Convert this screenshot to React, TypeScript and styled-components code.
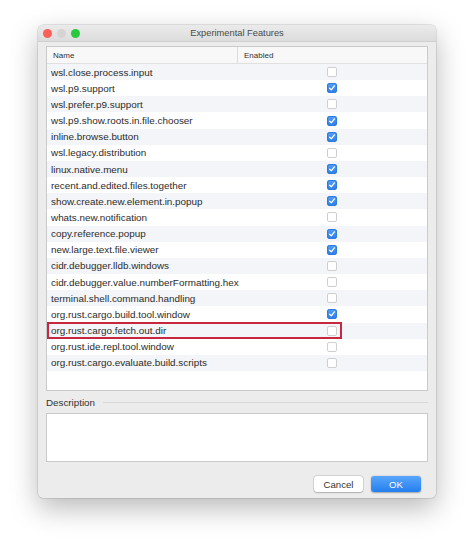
import styled, {createGlobalStyle} from 'styled-components';

const GlobalStyle = createGlobalStyle`
  html, body {
    margin: 0;
    padding: 0;
    background: #ffffff;
  }
  body {
    font-family: "Liberation Sans", Arial, sans-serif;
    -webkit-font-smoothing: antialiased;
  }
`;

type FeatureT = {
    name: string;
    enabled: boolean;
    marked?: boolean;
};

const features: FeatureT[] = [
    {name: 'wsl.close.process.input', enabled: false},
    {name: 'wsl.p9.support', enabled: true},
    {name: 'wsl.prefer.p9.support', enabled: false},
    {name: 'wsl.p9.show.roots.in.file.chooser', enabled: true},
    {name: 'inline.browse.button', enabled: true},
    {name: 'wsl.legacy.distribution', enabled: false},
    {name: 'linux.native.menu', enabled: true},
    {name: 'recent.and.edited.files.together', enabled: true},
    {name: 'show.create.new.element.in.popup', enabled: true},
    {name: 'whats.new.notification', enabled: false},
    {name: 'copy.reference.popup', enabled: true},
    {name: 'new.large.text.file.viewer', enabled: true},
    {name: 'cidr.debugger.lldb.windows', enabled: false},
    {name: 'cidr.debugger.value.numberFormatting.hex', enabled: false},
    {name: 'terminal.shell.command.handling', enabled: false},
    {name: 'org.rust.cargo.build.tool.window', enabled: true},
    {name: 'org.rust.cargo.fetch.out.dir', enabled: false, marked: true},
    {name: 'org.rust.ide.repl.tool.window', enabled: false},
    {name: 'org.rust.cargo.evaluate.build.scripts', enabled: false},
];

const Page = styled.div`
  padding: 25px 38px 40px 38px;
`;

const Window = styled.div`
  width: 398px;
  height: 473px;
  background: #ececec;
  border-radius: 5px;
  box-shadow: 0 0 0 0.5px rgba(0, 0, 0, 0.18), 0 10px 28px rgba(0, 0, 0, 0.28);
  display: flex;
  flex-direction: column;
  overflow: hidden;
`;

const TitleBar = styled.div`
  height: 17px;
  flex-shrink: 0;
  display: flex;
  align-items: center;
  position: relative;
  background: linear-gradient(#ebebeb, #dcdcdc);
  border-bottom: 1px solid #cfcfcf;
  box-sizing: border-box;
`;

const Lights = styled.div`
  display: flex;
  gap: 5px;
  padding-left: 5px;
`;

const Light = styled.span<{ $color: string }>`
  width: 9px;
  height: 9px;
  border-radius: 50%;
  background: ${p => p.$color};
`;

const Title = styled.div`
  position: absolute;
  left: 0;
  right: 0;
  text-align: center;
  font-size: 9.3px;
  color: #4a4a4a;
`;

const Body = styled.div`
  flex: 1;
  display: flex;
  flex-direction: column;
  padding: 4px 8px 0 8px;
`;

const Table = styled.div`
  height: 345px;
  box-sizing: border-box;
  border: 1px solid #cacaca;
  background: #ffffff;
  display: flex;
  flex-direction: column;
`;

const HeaderRow = styled.div`
  height: 17px;
  flex-shrink: 0;
  display: grid;
  grid-template-columns: 190px 1fr;
  background: #f8f8f8;
  border-bottom: 1px solid #e0e0e0;
  box-sizing: border-box;
  font-size: 8px;
  color: #333;
`;

const HeaderCell = styled.div<{ $divider?: boolean }>`
  display: flex;
  align-items: center;
  padding-left: 6px;
  border-left: ${p => p.$divider ? '1px solid #dcdcdc' : 'none'};
`;

const Row = styled.div<{ $striped: boolean }>`
  position: relative;
  height: 16.17px;
  display: grid;
  grid-template-columns: 280px 1fr;
  align-items: center;
  background: ${p => p.$striped ? '#f3f5f8' : '#ffffff'};
  font-size: 9.9px;
  color: #2b2b2b;
`;

const NameCell = styled.div`
  padding-left: 4px;
  white-space: nowrap;
`;

const CheckCell = styled.div`
  display: flex;
  align-items: center;
`;

const Check = styled.span<{ $on: boolean }>`
  width: 10px;
  height: 10px;
  box-sizing: border-box;
  border-radius: 2px;
  display: flex;
  align-items: center;
  justify-content: center;
  background: ${p => p.$on ? 'linear-gradient(#4f9bf3, #2f7fe6)' : '#ffffff'};
  border: 1px solid ${p => p.$on ? '#2f7be0' : '#cfcfcf'};
`;

const Marker = styled.div`
  position: absolute;
  left: 0;
  top: -0.5px;
  width: 295px;
  height: 17px;
  box-sizing: border-box;
  border: 2px solid #c8283f;
  pointer-events: none;
`;

const SectionHead = styled.div`
  display: flex;
  align-items: center;
  gap: 8px;
  height: 12px;
  margin-top: 5px;
  font-size: 9.8px;
  color: #333;

  &::after {
    content: '';
    flex: 1;
    height: 1px;
    background: #d8d8d8;
  }
`;

const DescriptionBox = styled.div`
  margin-top: 5px;
  height: 49px;
  box-sizing: border-box;
  border: 1px solid #cacaca;
  background: #ffffff;
`;

const Footer = styled.div`
  display: flex;
  justify-content: flex-end;
  gap: 8px;
  margin-top: 14px;
  padding-right: 7px;
`;

const Button = styled.button<{ $primary?: boolean }>`
  width: ${p => p.$primary ? '50px' : '49px'};
  height: 16px;
  padding: 0;
  border-radius: 3px;
  font-family: "Liberation Sans", Arial, sans-serif;
  font-size: 9.6px;
  border: none;
  color: ${p => p.$primary ? '#ffffff' : '#333333'};
  background: ${p => p.$primary ? 'linear-gradient(#5aa5fa, #2480f0)' : '#ffffff'};
  box-shadow: ${p => p.$primary
        ? '0 0.5px 1.5px rgba(0,0,0,0.3)'
        : '0 0 0 0.5px rgba(0,0,0,0.15), 0 0.5px 1.5px rgba(0,0,0,0.2)'};
`;

function Tick() {
    return (
        <svg width="8" height="8" viewBox="0 0 8 8">
            <path d="M1.6 4.2 L3.3 5.9 L6.4 1.9" fill="none" stroke="#ffffff" strokeWidth="1.3"
                  strokeLinecap="round" strokeLinejoin="round"/>
        </svg>
    );
}

export default function App() {
    return (
        <>
            <GlobalStyle/>
            <Page>
                <Window>
                    <TitleBar>
                        <Lights>
                            <Light $color="#fc5f57"/>
                            <Light $color="#d4d4d4"/>
                            <Light $color="#2ac840"/>
                        </Lights>
                        <Title>Experimental Features</Title>
                    </TitleBar>
                    <Body>
                        <Table>
                            <HeaderRow>
                                <HeaderCell>Name</HeaderCell>
                                <HeaderCell $divider>Enabled</HeaderCell>
                            </HeaderRow>
                            {features.map((feature, index) => (
                                <Row $striped={index % 2 === 0} key={`feature-${feature.name}`}>
                                    <NameCell>{feature.name}</NameCell>
                                    <CheckCell>
                                        <Check $on={feature.enabled}>{feature.enabled && <Tick/>}</Check>
                                    </CheckCell>
                                    {feature.marked && <Marker/>}
                                </Row>
                            ))}
                        </Table>
                        <SectionHead>Description</SectionHead>
                        <DescriptionBox/>
                        <Footer>
                            <Button>Cancel</Button>
                            <Button $primary>OK</Button>
                        </Footer>
                    </Body>
                </Window>
            </Page>
        </>
    );
}
